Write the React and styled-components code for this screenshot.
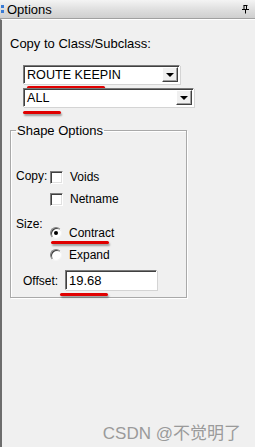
import React from 'react';
import styled, { createGlobalStyle } from 'styled-components';

const Global = createGlobalStyle`
  html, body {
    margin: 0;
    padding: 0;
    background: #f0f0f0;
  }
  body {
    font-family: "Liberation Sans", Arial, sans-serif;
    font-size: 12px;
    color: #000;
  }
`;

const Window = styled.div`
  width: 255px;
  height: 447px;
  display: flex;
  flex-direction: column;
  background: #f0f0f0;
  overflow: hidden;
`;

const TitleBar = styled.div`
  height: 18px;
  display: flex;
  align-items: center;
  padding: 0 6px 0 1px;
  background: linear-gradient(#f4f4f4, #dcdcdc 60%, #cfcfcf);
  border-bottom: 1px solid #a0a0a0;
  font-size: 13px;
`;

const Grip = styled.span`
  display: flex;
  flex-direction: column;
  gap: 2px;
  margin-right: 3px;
  span {
    width: 3px;
    height: 3px;
    background: #3a7bd5;
  }
`;

const TitleText = styled.span`
  flex: 1;
`;

const Body = styled.div`
  flex: 1;
  position: relative;
  border-top: 1px solid #ffffff;
  border-left: 2px solid #6d6d6d;
  padding: 17px 0 0 8px;
`;

const Label = styled.div`
  line-height: 14px;
  font-size: 13px;
`;

const Combos = styled.div`
  display: flex;
  flex-direction: column;
  gap: 4px;
  margin: 14px 0 0 13px;
`;

const Combo = styled.div`
  position: relative;
  width: ${p => p.$w}px;
  height: 19px;
  box-sizing: border-box;
  display: flex;
  background: #fff;
  border-top: 1px solid #7a7a7a;
  border-left: 1px solid #7a7a7a;
  border-right: 1px solid #fff;
  border-bottom: 1px solid #fff;
  box-shadow: inset 1px 1px 0 #404040, 1px 1px 0 #d4d4d4;
`;

const ComboText = styled.div`
  flex: 1;
  padding: 2px 0 0 3px;
  font-size: 12.6px;
`;

const ArrowBtn = styled.div`
  width: 16px;
  margin: 1px 1px 1px 0;
  box-sizing: border-box;
  background: #f0f0f0;
  border-top: 1px solid #fff;
  border-left: 1px solid #fff;
  border-right: 1px solid #404040;
  border-bottom: 1px solid #404040;
  box-shadow: inset -1px -1px 0 #a0a0a0;
  display: flex;
  align-items: center;
  justify-content: center;
  &::after {
    content: '';
    border-left: 4px solid transparent;
    border-right: 4px solid transparent;
    border-top: 4px solid #000;
  }
`;

const Group = styled.fieldset`
  margin: 16px 0 0 0;
  width: 177px;
  height: 175px;
  box-sizing: border-box;
  border: 1px solid #a9a9a9;
  box-shadow: 1px 1px 0 #fff, inset 1px 1px 0 #fff;
  padding: 0 0 0 5px;
  legend {
    padding: 0 1px;
    margin-left: 0;
    font-size: 13px;
  }
`;

const Row = styled.div`
  display: flex;
  align-items: flex-start;
  margin-top: ${p => p.$mt || 0}px;
`;

const RowLabel = styled.div`
  flex: none;
  width: ${p => p.$w || 34}px;
  padding-left: ${p => p.$pl || 0}px;
  padding-top: ${p => p.$pt || 0}px;
  box-sizing: border-box;
  line-height: 14px;
`;

const Options = styled.div`
  display: flex;
  flex-direction: column;
  gap: ${p => p.$gap}px;
  margin-top: ${p => p.$mt || 0}px;
`;

const Option = styled.div`
  position: relative;
  display: flex;
  align-items: center;
  gap: 7px;
  height: 14px;
`;

const CheckBox = styled.span`
  width: 13px;
  height: 13px;
  box-sizing: border-box;
  background: #fff;
  border-top: 1px solid #808080;
  border-left: 1px solid #808080;
  border-right: 1px solid #fff;
  border-bottom: 1px solid #fff;
  box-shadow: inset 1px 1px 0 #404040, inset -1px -1px 0 #e0e0e0;
`;

const Radio = styled.span`
  width: 12px;
  height: 12px;
  box-sizing: border-box;
  border-radius: 50%;
  background: #fff;
  border: 1px solid;
  border-color: #808080 #f4f4f4 #f4f4f4 #808080;
  box-shadow: inset 1px 1px 0 #404040;
  display: flex;
  align-items: center;
  justify-content: center;
  &::after {
    content: '';
    width: 4px;
    height: 4px;
    border-radius: 50%;
    background: ${p => (p.$on ? '#000' : 'transparent')};
  }
`;

const InputWrap = styled.div`
  position: relative;
`;

const TextInput = styled.div`
  width: 92px;
  height: 20px;
  box-sizing: border-box;
  background: #fff;
  border-top: 1px solid #7a7a7a;
  border-left: 1px solid #7a7a7a;
  border-right: 1px solid #fff;
  border-bottom: 1px solid #fff;
  box-shadow: inset 1px 1px 0 #404040, 1px 1px 0 #d4d4d4;
  padding: 2px 0 0 3px;
  font-size: 13px;
`;

const Mark = styled.span`
  position: absolute;
  left: ${p => p.$x}px;
  top: ${p => p.$y}px;
  width: ${p => p.$w}px;
  height: 3px;
  border-radius: 2px;
  background: #e00000;
  box-shadow: 1px 2px 2px rgba(0, 0, 0, 0.35);
`;

const Watermark = styled.div`
  position: absolute;
  right: 14px;
  bottom: 3px;
  font-family: "Liberation Sans", "Noto Sans CJK SC", sans-serif;
  font-size: 17px;
  color: #9a9a9a;
`;

const PinIcon = () => (
  <svg width="7" height="9" viewBox="0 0 7 9">
    <path d="M1.5 0.5h4M2 0.5v4M4.5 0.5v4M0 4.5h7M3.5 4.5v4" stroke="#000" strokeWidth="1" fill="none" />
  </svg>
);

export default function App() {
  return (
    <Window>
      <Global />
      <TitleBar>
        <Grip><span /><span /></Grip>
        <TitleText>Options</TitleText>
        <PinIcon />
      </TitleBar>
      <Body>
        <Label>Copy to Class/Subclass:</Label>
        <Combos>
          <Combo $w={157}>
            <ComboText>ROUTE KEEPIN</ComboText>
            <ArrowBtn />
            <Mark $x={3} $y={20} $w={78} />
          </Combo>
          <Combo $w={171}>
            <ComboText>ALL</ComboText>
            <ArrowBtn />
            <Mark $x={-1} $y={22} $w={38} />
          </Combo>
        </Combos>
        <Group>
          <legend>Shape Options</legend>
          <Row $mt={31}>
            <RowLabel>Copy:</RowLabel>
            <Options $gap={8} $mt={1}>
              <Option><CheckBox />Voids</Option>
              <Option><CheckBox />Netname</Option>
            </Options>
          </Row>
          <Row $mt={11}>
            <RowLabel>Size:</RowLabel>
            <Options $gap={8} $mt={9}>
              <Option>
                <Radio $on />Contract
                <Mark $x={1} $y={15} $w={58} />
              </Option>
              <Option><Radio />Expand</Option>
            </Options>
          </Row>
          <Row $mt={8}>
            <RowLabel $w={49} $pl={7} $pt={4}>Offset:</RowLabel>
            <InputWrap>
              <TextInput>19.68</TextInput>
              <Mark $x={-5} $y={23} $w={48} />
            </InputWrap>
          </Row>
        </Group>
        <Watermark>CSDN @不觉明了</Watermark>
      </Body>
    </Window>
  );
}
